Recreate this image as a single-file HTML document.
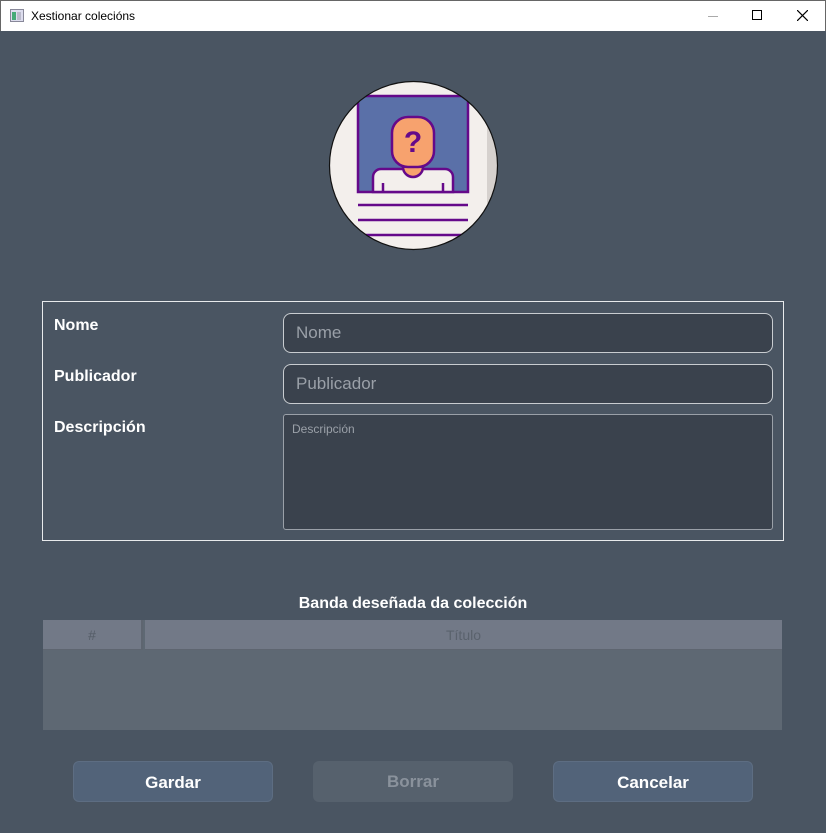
<!DOCTYPE html>
<html><head><meta charset="utf-8"><style>
*{margin:0;padding:0;box-sizing:border-box}
body{width:826px;height:833px;background:#4a5562;font-family:"Liberation Sans","DejaVu Sans",sans-serif;position:relative;overflow:hidden}
.tb{position:absolute;left:0;top:0;width:826px;height:31px;background:#fff;border:1px solid #666;border-bottom:none}
.tb .t{position:absolute;left:30px;top:8px;font-size:12px;color:#000}
.lbl{position:absolute;left:54px;color:#fff;font-weight:bold;font-size:16px}
.inp{position:absolute;left:283px;width:490px;background:#3a424d;border:1px solid #c8ccd0;border-radius:8px;color:#9aa0a8;font-size:17px;padding-left:12px}
.btn{position:absolute;top:761px;width:200px;height:41px;border-radius:6px;font-weight:bold;font-size:17px;color:#fff;text-align:center;line-height:41px}
</style></head><body>
<div class="tb">
<svg style="position:absolute;left:9px;top:8px" width="14" height="13"><rect x="0.5" y="0.5" width="13" height="12" fill="#dde" stroke="#889"/><rect x="2" y="3" width="4" height="8" fill="#4a7"/><rect x="7" y="3" width="4" height="8" fill="#bbc"/></svg>
<div class="t">Xestionar colecións</div>
<div style="position:absolute;left:707px;top:15px;width:10px;height:1px;background:#aaa"></div>
<div style="position:absolute;left:751px;top:9px;width:10px;height:10px;border:1px solid #000"></div>
<svg style="position:absolute;left:796px;top:9px" width="11" height="11"><path d="M0 0L11 11M11 0L0 11" stroke="#000" stroke-width="1.2"/></svg>
</div>
<svg style="position:absolute;left:328px;top:80px" width="171" height="171" viewBox="0 0 171 171">
<defs><clipPath id="c"><circle cx="85.5" cy="85.5" r="84"/></clipPath></defs>
<g clip-path="url(#c)">
<rect width="171" height="171" fill="#f3efec"/>
<rect x="159" y="0" width="12" height="171" fill="#d6d1ce"/>
<rect x="30" y="16" width="110" height="96" fill="#5a70a8" stroke="#65098a" stroke-width="2.5"/>
<path d="M45 112V97a8 8 0 0 1 8-8h64a8 8 0 0 1 8 8v15z" fill="#f3efec" stroke="#65098a" stroke-width="2.5"/>
<path d="M75 82v5a10 10 0 0 0 20 0v-5z" fill="#f7a26e" stroke="#65098a" stroke-width="2.5"/>
<rect x="64" y="37" width="42" height="50" rx="16" fill="#f7a26e" stroke="#65098a" stroke-width="2.5"/>
<text x="85" y="72" text-anchor="middle" font-size="30" font-weight="bold" fill="#65098a" font-family="Liberation Sans">?</text>
<path d="M55 103v9M115 103v9" stroke="#65098a" stroke-width="2.5"/>
<path d="M30 125h110M30 140h110M30 155h110" stroke="#65098a" stroke-width="2.5"/>
</g>
<circle cx="85.5" cy="85.5" r="84" fill="none" stroke="#111" stroke-width="1.2"/>
</svg>
<div style="position:absolute;left:42px;top:301px;width:742px;height:240px;border:1px solid #e8eaec"></div>
<div class="lbl" style="top:317px">Nome</div>
<div class="lbl" style="top:368px">Publicador</div>
<div class="lbl" style="top:419px">Descripción</div>
<div class="inp" style="top:313px;height:40px;line-height:38px">Nome</div>
<div class="inp" style="top:364px;height:40px;line-height:38px">Publicador</div>
<div class="inp" style="top:414px;height:116px;border-radius:3px;font-size:12px;padding:7px 8px;line-height:14px;border-color:#9aa0a8">Descripción</div>
<div style="position:absolute;left:0;width:826px;top:595px;text-align:center;color:#fff;font-weight:bold;font-size:16px">Banda deseñada da colección</div>
<div style="position:absolute;left:43px;top:620px;width:739px;height:110px;background:#5e6873"></div>
<div style="position:absolute;left:43px;top:620px;width:100px;height:30px;background:#727987;border-right:2px solid #5e6570;border-bottom:1px solid #5e6570;color:#555d68;text-align:center;line-height:30px;font-size:14px">#</div>
<div style="position:absolute;left:145px;top:620px;width:637px;height:30px;background:#727987;border-bottom:1px solid #5e6570;color:#5a626d;text-align:center;line-height:30px;font-size:14px">Título</div>
<div class="btn" style="left:73px;background:#526379;border:1px solid #5d6d82">Gardar</div>
<div class="btn" style="left:313px;background:#56616d;color:#8a929c">Borrar</div>
<div class="btn" style="left:553px;background:#526379;border:1px solid #5d6d82">Cancelar</div>
</body></html>
